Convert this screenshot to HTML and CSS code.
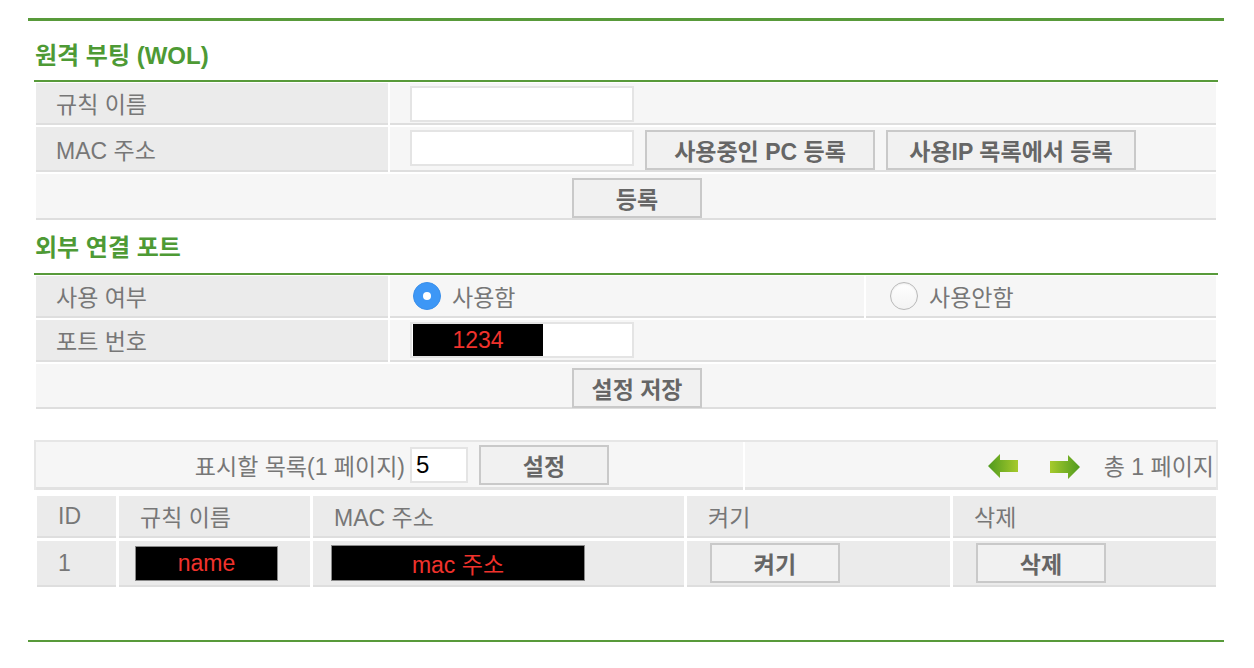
FILE: index.html
```html
<!DOCTYPE html>
<html lang="ko">
<head>
<meta charset="utf-8">
<title>원격 부팅 (WOL)</title>
<link rel="stylesheet" href="styles.css">
</head>
<body>
<div class="wrap">
  <div class="inner">
    <h2 class="title t1">원격 부팅 (WOL)</h2>
    <div class="tbl">
      <div class="row r1">
        <div class="lab">규칙 이름</div>
        <div class="val top"><span class="inp"></span></div>
      </div>
      <div class="row r2">
        <div class="lab">MAC 주소</div>
        <div class="val top">
          <span class="inp"></span>
          <span class="btn b-pc">사용중인 PC 등록</span>
          <span class="btn b-ip">사용IP 목록에서 등록</span>
        </div>
      </div>
      <div class="row r3">
        <div class="val full"><span class="btn b-save">등록</span></div>
      </div>
    </div>

    <h2 class="title t2">외부 연결 포트</h2>
    <div class="tbl">
      <div class="row r1">
        <div class="lab">사용 여부</div>
        <div class="val radio-a"><span class="radio on"></span><span class="rtxt">사용함</span></div>
        <div class="val radio-b"><span class="radio"></span><span class="rtxt">사용안함</span></div>
      </div>
      <div class="row r2b">
        <div class="lab">포트 번호</div>
        <div class="val"><span class="inp port"><span class="mask">1234</span></span></div>
      </div>
      <div class="row r3b">
        <div class="val full"><span class="btn b-save">설정 저장</span></div>
      </div>
    </div>

    <div class="pager">
      <div class="pcell pleft">
        <span class="plabel">표시할 목록(1 페이지)</span>
        <span class="inp num">5</span>
        <span class="btn b-set">설정</span>
      </div>
      <div class="pcell pright">
        <svg class="arr arr-l" width="30" height="24" viewBox="0 0 30 24">
          <defs>
            <linearGradient id="gl" x1="0" y1="0" x2="1" y2="0">
              <stop offset="0" stop-color="#4f9a1e"/>
              <stop offset="1" stop-color="#a6ca2c"/>
            </linearGradient>
          </defs>
          <polygon points="0,12 12,0 12,6 30,6 30,18 12,18 12,24" fill="url(#gl)"/>
        </svg>
        <svg class="arr arr-r" width="30" height="24" viewBox="0 0 30 24">
          <defs>
            <linearGradient id="gr" x1="0" y1="0" x2="1" y2="0">
              <stop offset="0" stop-color="#a6ca2c"/>
              <stop offset="1" stop-color="#4f9a1e"/>
            </linearGradient>
          </defs>
          <polygon points="30,12 18,0 18,6 0,6 0,18 18,18 18,24" fill="url(#gr)"/>
        </svg>
        <span class="ptotal">총 1 페이지</span>
      </div>
    </div>

    <div class="list">
      <div class="lrow head">
        <div class="c c-id">ID</div>
        <div class="c c-name">규칙 이름</div>
        <div class="c c-mac">MAC 주소</div>
        <div class="c c-on">켜기</div>
        <div class="c c-del">삭제</div>
      </div>
      <div class="lrow data">
        <div class="c c-id">1</div>
        <div class="c c-name"><span class="mask m-name">name</span></div>
        <div class="c c-mac"><span class="mask m-mac">mac 주소</span></div>
        <div class="c c-on"><span class="btn b-row">켜기</span></div>
        <div class="c c-del"><span class="btn b-row">삭제</span></div>
      </div>
    </div>
  </div>
</div>
</body>
</html>
```

FILE: styles.css
```css
* { box-sizing: border-box; }
html, body { margin: 0; padding: 0; background: #fff; }
body {
  font-family: "Liberation Sans", "Noto Sans CJK KR", sans-serif;
  font-size: 23px;
  color: #777;
  padding-top: 18px;
}
.wrap {
  margin-left: 28px;
  width: 1196px;
  border-top: 3px solid #589a3a;
  border-bottom: 2px solid #589a3a;
  padding-bottom: 50px;
}
.inner { margin: 0 6px; }

.title {
  margin: 0;
  font-size: 24px;
  font-weight: bold;
  color: #4e9a35;
  line-height: 26px;
  padding-left: 1px;
  border-bottom: 2px solid #589a3a;
}
.t1 { padding-top: 22px; padding-bottom: 11px; }
.t2 { padding-top: 15px; padding-bottom: 12px; }

.tbl { padding: 1px 2px 0 2px; }
.row { display: flex; gap: 2px; margin-bottom: 2px; }
.row:last-child { margin-bottom: 0; }
.r1 { height: 42px; }
.r2 { height: 45px; }
.r3 { height: 46px; }
.r2b { height: 42px; }
.r3b { height: 45px; }

.lab {
  width: 352px;
  flex: none;
  background: #ebebeb;
  border-bottom: 2px solid #dedede;
  padding-left: 20px;
  display: flex;
  align-items: center;
}
.val {
  flex: 1;
  background: #f6f6f6;
  border-bottom: 2px solid #dedede;
  padding-left: 20px;
  display: flex;
  align-items: center;
}
.val.top { align-items: flex-start; padding-top: 3px; }
.val.full { padding-left: 536px; align-items: flex-start; padding-top: 4px; }

.inp {
  display: inline-block;
  width: 224px;
  height: 36px;
  background: #fff;
  border: 2px solid #e4e4e4;
  flex: none;
}

.btn {
  display: inline-flex;
  align-items: center;
  justify-content: center;
  height: 40px;
  background: #f1f1f1;
  border: 2px solid #c9c9c9;
  color: #666;
  font-weight: bold;
  flex: none;
}
.b-pc { width: 230px; margin-left: 11px; }
.b-ip { width: 250px; margin-left: 11px; }
.b-save { width: 130px; }

.radio-a { flex: none; width: 474px; padding-left: 23px; }
.radio-b { padding-left: 24px; }
.radio {
  width: 28px;
  height: 28px;
  border-radius: 50%;
  flex: none;
  background: linear-gradient(#ffffff, #f3f3f3);
  border: 1px solid #b9b9b9;
  box-shadow: inset 0 1px 2px rgba(0,0,0,0.08);
  position: relative;
}
.radio.on {
  background: #3d97f6;
  border: 1px solid #3a8fea;
  box-shadow: none;
}
.radio.on::after {
  content: "";
  position: absolute;
  left: 9px;
  top: 9px;
  width: 8px;
  height: 8px;
  border-radius: 50%;
  background: #fff;
}
.rtxt { margin-left: 11px; }

.port { display: inline-flex; align-items: center; padding-left: 1px; height: 36px; }
.mask {
  display: inline-flex;
  align-items: center;
  justify-content: center;
  background: #000;
  color: #f0322c;
  border: 1px solid #8a8a8a;
}
.port .mask { width: 130px; height: 32px; border: none; }

.pager {
  margin-top: 31px;
  border: 2px solid #e6e6e6;
  border-bottom: none;
  display: flex;
  gap: 2px;
  height: 50px;
}
.pcell {
  background: #f6f6f6;
  border-bottom: 3px solid #e2e2e2;
  display: flex;
  align-items: center;
  padding-top: 1px;
}
.pleft { width: 707px; flex: none; }
.pright { flex: 1; justify-content: flex-end; padding-right: 2px; }
.plabel { width: 369px; text-align: right; flex: none; }
.num {
  width: 58px;
  margin-left: 5px;
  color: #000;
  font-size: 24px;
  padding-left: 4px;
  display: inline-flex;
  align-items: center;
}
.b-set { width: 130px; margin-left: 11px; }
.arr { flex: none; display: block; }
.arr-l { margin-top: 2px; }
.arr-r { margin-left: 32px; margin-top: 4px; }
.ptotal { margin-left: 24px; }

.list { margin-top: 6px; padding-left: 3px; }
.lrow { display: flex; gap: 3px; margin-bottom: 3px; }
.head { height: 42px; }
.data { height: 46px; }
.c {
  background: #ebebeb;
  border-bottom: 2px solid #dedede;
  display: flex;
  align-items: center;
  padding-left: 21px;
  flex: none;
}
.c-id { width: 79px; }
.c-name { width: 191px; }
.c-mac { width: 371px; }
.c-on { width: 263px; }
.c-del { width: 263px; }
.data .c-name { padding-left: 16px; }
.data .c-mac { padding-left: 18px; }
.data .c-on, .data .c-del { padding-left: 23px; }
.m-name { width: 143px; height: 35px; }
.m-mac { width: 254px; height: 36px; }
.b-row { width: 130px; height: 40px; }
```
